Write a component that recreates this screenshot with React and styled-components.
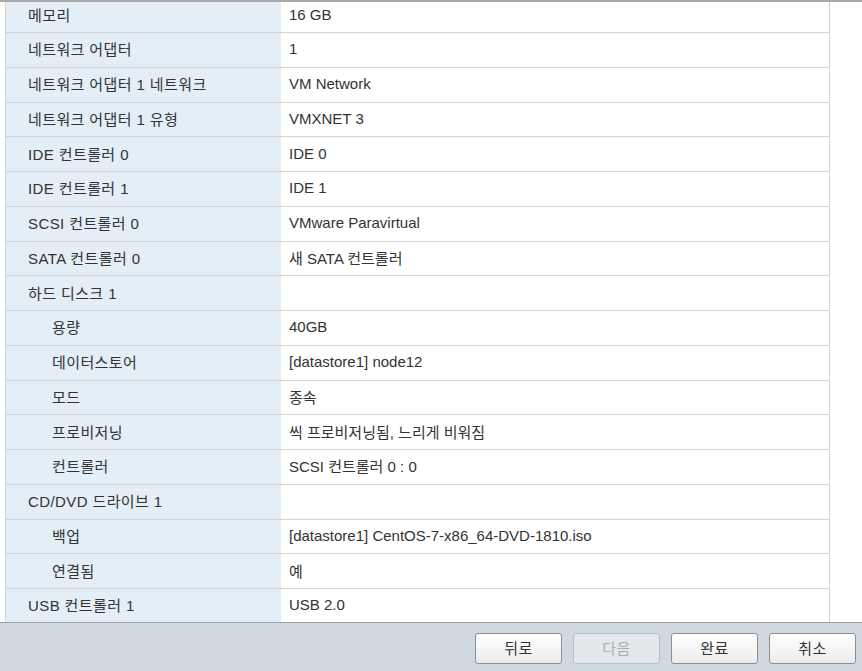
import React from 'react';
import styled, { createGlobalStyle } from 'styled-components';

const GlobalStyle = createGlobalStyle`
  html, body {
    margin: 0;
    padding: 0;
    background: #ffffff;
    font-family: "Liberation Sans", "Noto Sans CJK KR", sans-serif;
  }
`;

const Page = styled.div`
  width: 862px;
  height: 671px;
  display: flex;
  flex-direction: column;
  overflow: hidden;
  background: #fff;
`;

const Scroller = styled.div`
  height: 620px;
  border-top: 2px solid #a8a8a8;
  overflow: hidden;
  padding-left: 5px;
  padding-right: 32px;
`;

const Table = styled.div`
  margin-top: -3.75px;
  border-left: 1px solid #d4d4d4;
  border-right: 1px solid #d4d4d4;
`;

const Row = styled.div`
  display: grid;
  grid-template-columns: 275px 1fr;
  height: 34.75px;
  box-sizing: border-box;
  border-bottom: 1px solid #d4d4d4;
`;

const Label = styled.div`
  background: #e3eef6;
  display: flex;
  align-items: center;
  padding-left: ${p => (p.$sub ? 46 : 22)}px;
  padding-bottom: 2px;
  font-size: 15px;
  letter-spacing: 0.4px;
  color: #333;
  white-space: nowrap;
`;

const Value = styled.div`
  display: flex;
  align-items: center;
  padding-left: 8px;
  padding-bottom: 2px;
  font-size: 15px;
  color: #333;
  white-space: nowrap;
`;

const Footer = styled.div`
  flex: 1;
  background: #d0d8e0;
  border-top: 1px solid #9ea4aa;
  display: flex;
  justify-content: flex-end;
  align-items: flex-start;
  gap: 11px;
  padding: 10px 6px 0 0;
`;

const Button = styled.button`
  width: 87px;
  height: 31px;
  border-radius: 3px;
  border: 1px solid ${p => (p.disabled ? '#b8bec4' : '#8e8e8e')};
  background: ${p =>
    p.disabled ? '#e4e8ec' : 'linear-gradient(#ffffff, #ececec)'};
  color: ${p => (p.disabled ? '#a9aeb3' : '#333')};
  font-family: "Liberation Sans", "Noto Sans CJK KR", sans-serif;
  font-size: 15px;
  letter-spacing: 0.4px;
  padding: 0 0 2px;
  cursor: ${p => (p.disabled ? 'default' : 'pointer')};
`;

const rows = [
  ['메모리', '16 GB'],
  ['네트워크 어댑터', '1'],
  ['네트워크 어댑터 1 네트워크', 'VM Network'],
  ['네트워크 어댑터 1 유형', 'VMXNET 3'],
  ['IDE 컨트롤러 0', 'IDE 0'],
  ['IDE 컨트롤러 1', 'IDE 1'],
  ['SCSI 컨트롤러 0', 'VMware Paravirtual'],
  ['SATA 컨트롤러 0', '새 SATA 컨트롤러'],
  ['하드 디스크 1', ''],
  ['용량', '40GB', true],
  ['데이터스토어', '[datastore1] node12', true],
  ['모드', '종속', true],
  ['프로비저닝', '씩 프로비저닝됨, 느리게 비워짐', true],
  ['컨트롤러', 'SCSI 컨트롤러 0 : 0', true],
  ['CD/DVD 드라이브 1', ''],
  ['백업', '[datastore1] CentOS-7-x86_64-DVD-1810.iso', true],
  ['연결됨', '예', true],
  ['USB 컨트롤러 1', 'USB 2.0'],
];

export default function App() {
  return (
    <Page>
      <GlobalStyle />
      <Scroller>
        <Table>
          {rows.map(([label, value, sub]) => (
            <Row key={label}>
              <Label $sub={sub}>{label}</Label>
              <Value>{value}</Value>
            </Row>
          ))}
        </Table>
      </Scroller>
      <Footer>
        <Button>뒤로</Button>
        <Button disabled>다음</Button>
        <Button>완료</Button>
        <Button>취소</Button>
      </Footer>
    </Page>
  );
}
